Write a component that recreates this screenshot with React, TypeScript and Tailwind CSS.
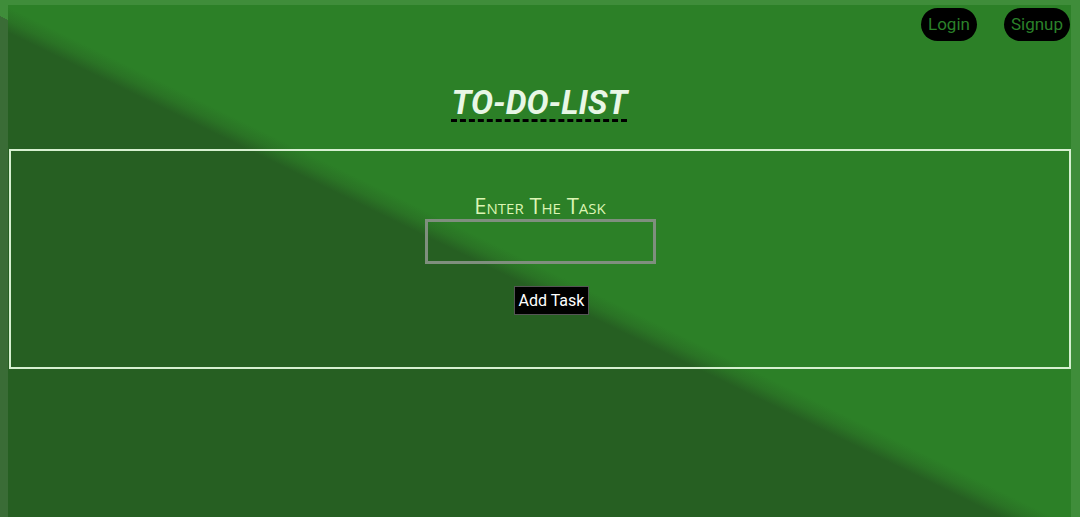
import React from "react";

export default function App() {
  return (
    <div
      className="h-[517px] w-full overflow-hidden pl-[8px] pr-[9px] pt-[5px]"
      style={{
        background: "linear-gradient(26deg, #3a6c36 48%, #3f8d3a 48%)",
      }}
    >
      <div
        className="flex h-full flex-col"
        style={{
          background:
            "linear-gradient(26deg, #265f22 47%, #2a7325 48.2%, #2c8027 49.5%)",
        }}
      >
        {/* Nav */}
        <div className="flex justify-end gap-[27px] pt-[3px] pr-px font-['Roboto',sans-serif]">
          <button className="h-[33px] rounded-full bg-black px-[7px] text-[17px] text-[#2b822a]">
            Login
          </button>
          <button className="h-[33px] rounded-full bg-black px-[7px] text-[17px] text-[#2b822a]">
            Signup
          </button>
        </div>

        {/* Title */}
        <h1 className="mt-[41px] text-center font-['Roboto',sans-serif] text-[33px] font-bold italic leading-[42px] text-[#e8f7e6] underline decoration-black decoration-dashed decoration-[3px] underline-offset-[5px]">
          TO-DO-LIST
        </h1>

        {/* Form box */}
        <div className="ml-px mt-[25px] flex h-[220px] flex-col items-center border-2 border-[#d6f0d0] pt-[40px]">
          <label className="font-['Open_Sans',sans-serif] text-[22px] font-medium leading-[28px] text-[#dcf5b4] [font-variant:small-caps]">
            Enter The Task
          </label>
          <input
            type="text"
            className="h-[45px] w-[231px] border-[3px] border-[#7f8f7e] bg-transparent outline-none"
          />
          <button className="ml-[23px] mt-[22px] h-[29px] border border-[#555] bg-black px-[4px] font-['Roboto',sans-serif] text-[16px] text-white">
            Add Task
          </button>
        </div>
      </div>
    </div>
  );
}
